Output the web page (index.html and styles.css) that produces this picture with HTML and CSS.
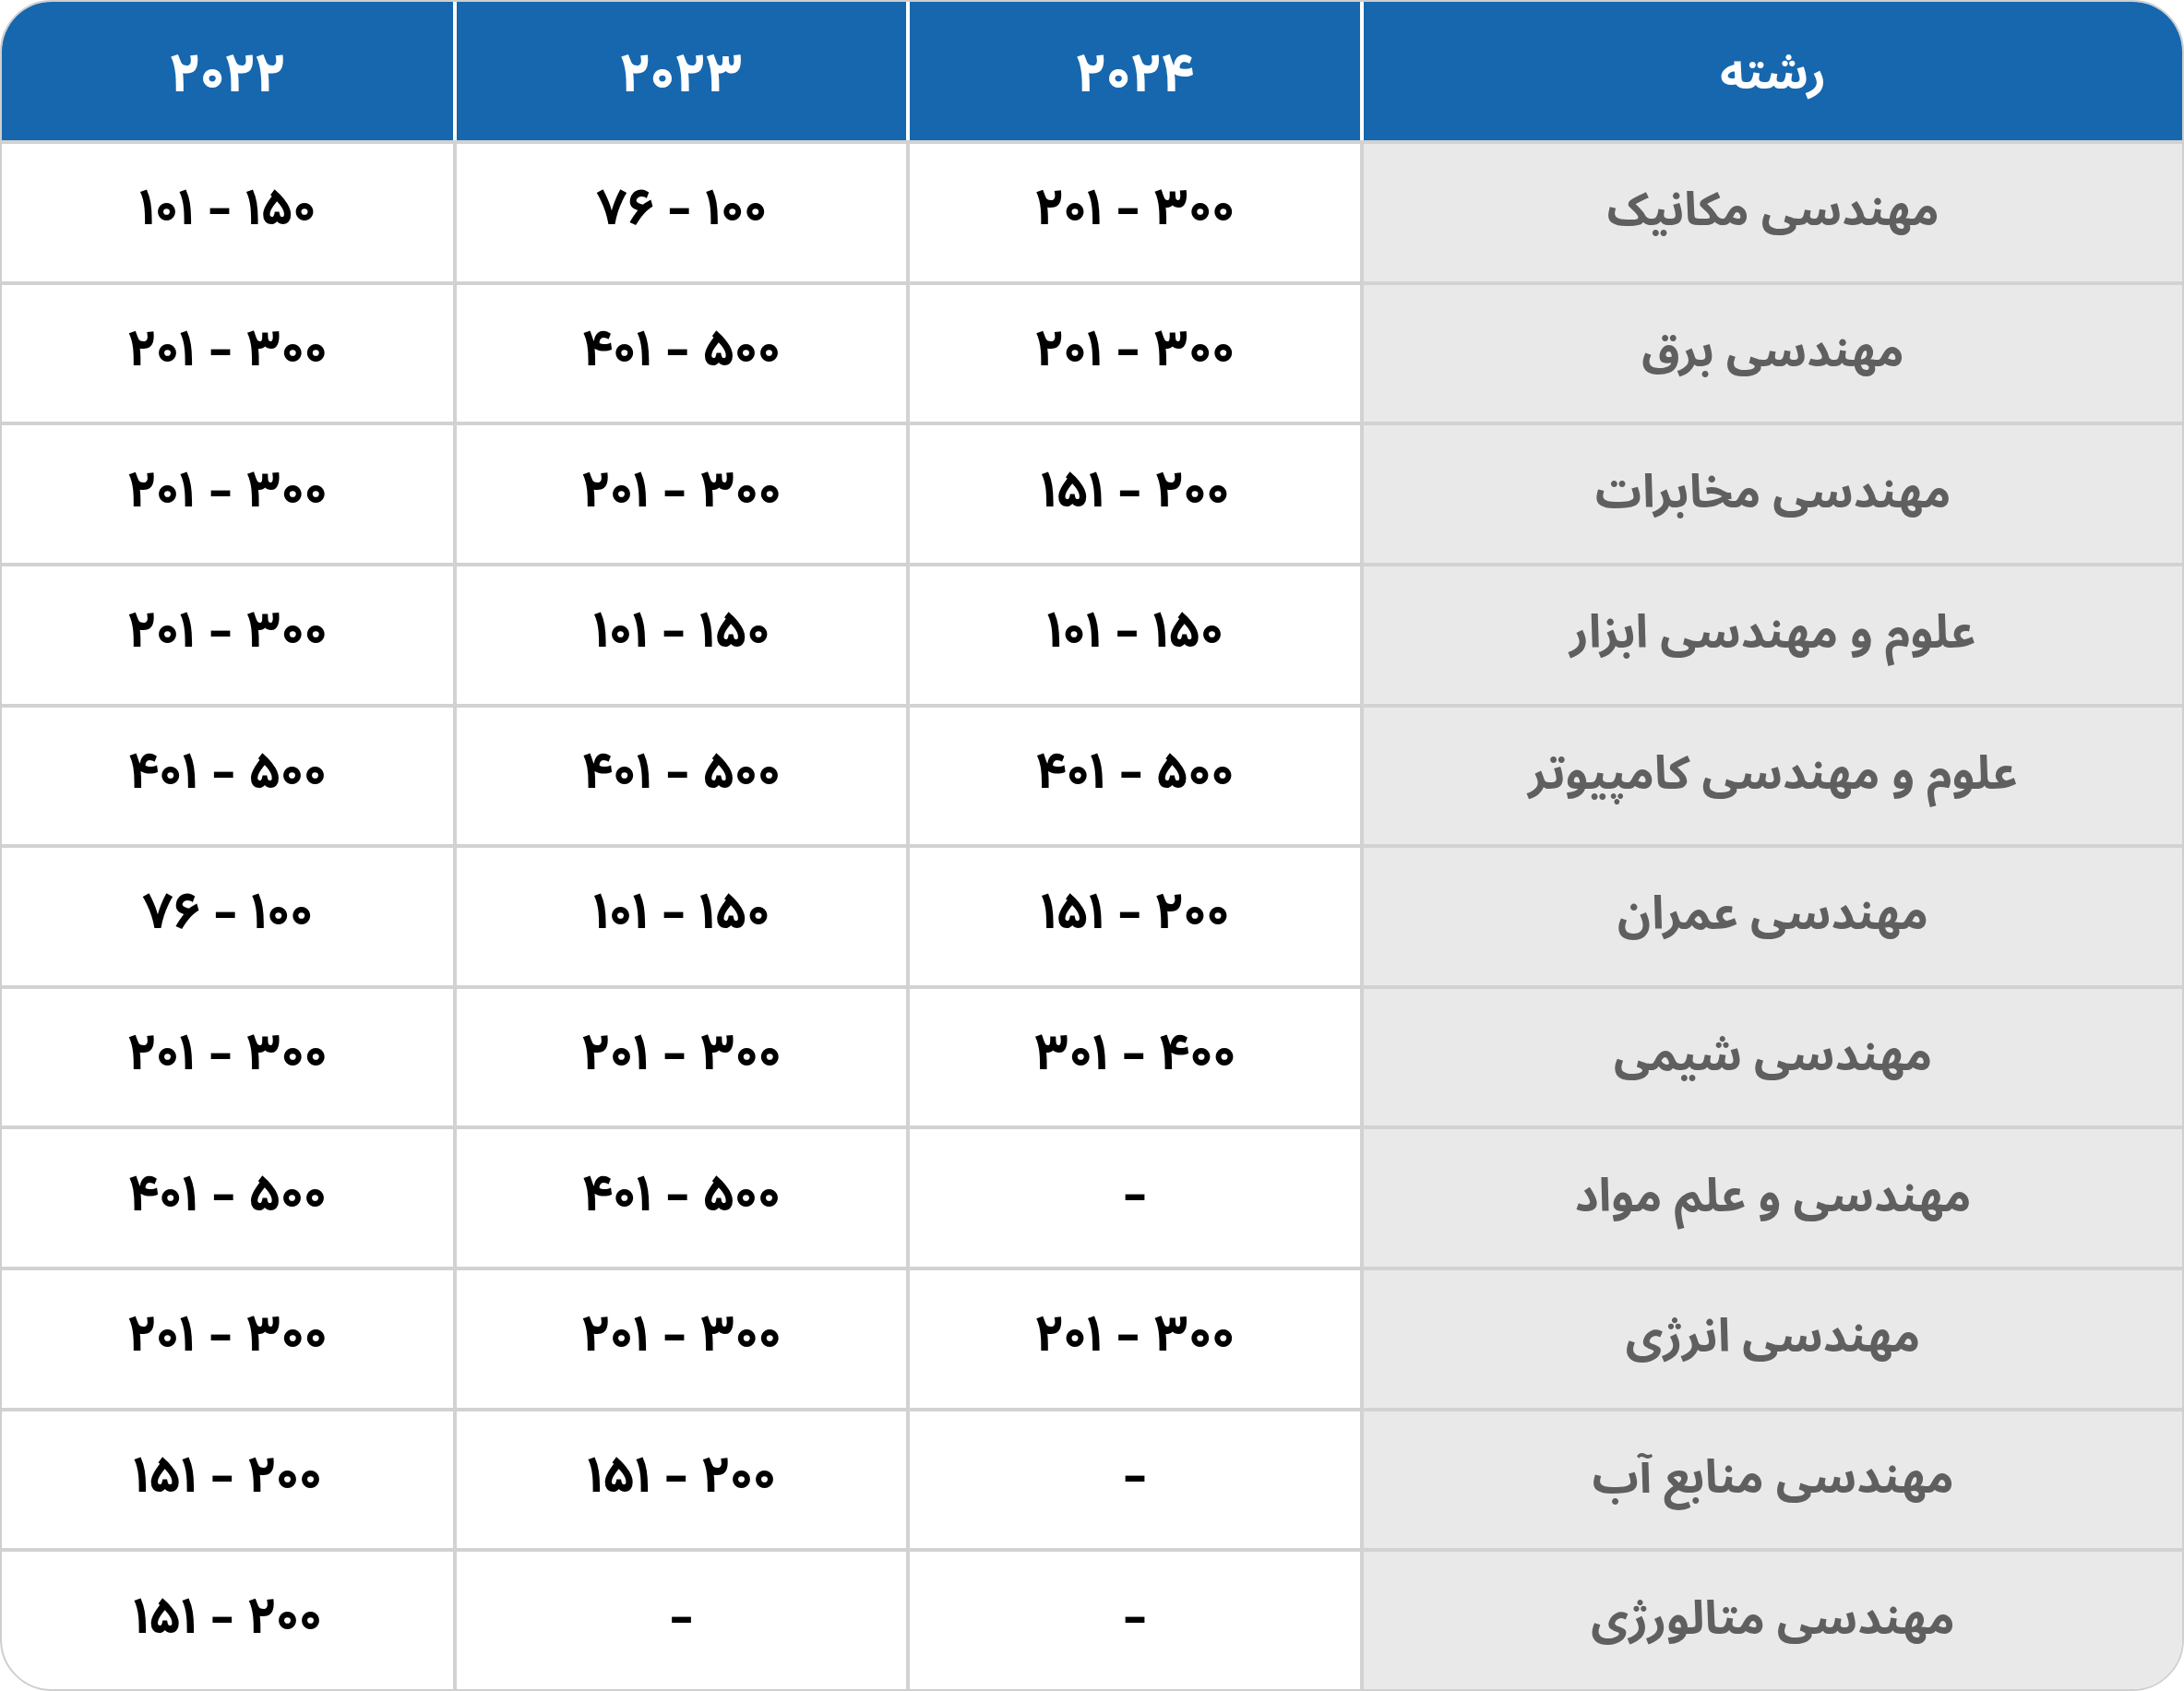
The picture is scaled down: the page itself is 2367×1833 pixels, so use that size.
FILE: index.html
```html
<!DOCTYPE html>
<html lang="fa" dir="rtl">
<head>
<meta charset="utf-8">
<title>رتبه‌بندی رشته‌ها</title>
<link rel="stylesheet" href="styles.css">
</head>
<body>
<div class="table">
  <div class="cell head">رشته</div>
  <div class="cell head num">۲۰۲۴</div>
  <div class="cell head num">۲۰۲۳</div>
  <div class="cell head num last">۲۰۲۲</div>

  <div class="cell field">مهندسی مکانیک</div>
  <div class="cell val">۲۰۱ - ۳۰۰</div>
  <div class="cell val">۷۶ - ۱۰۰</div>
  <div class="cell val last">۱۰۱ - ۱۵۰</div>

  <div class="cell field">مهندسی برق</div>
  <div class="cell val">۲۰۱ - ۳۰۰</div>
  <div class="cell val">۴۰۱ - ۵۰۰</div>
  <div class="cell val last">۲۰۱ - ۳۰۰</div>

  <div class="cell field">مهندسی مخابرات</div>
  <div class="cell val">۱۵۱ - ۲۰۰</div>
  <div class="cell val">۲۰۱ - ۳۰۰</div>
  <div class="cell val last">۲۰۱ - ۳۰۰</div>

  <div class="cell field">علوم و مهندسی ابزار</div>
  <div class="cell val">۱۰۱ - ۱۵۰</div>
  <div class="cell val">۱۰۱ - ۱۵۰</div>
  <div class="cell val last">۲۰۱ - ۳۰۰</div>

  <div class="cell field">علوم و مهندسی کامپیوتر</div>
  <div class="cell val">۴۰۱ - ۵۰۰</div>
  <div class="cell val">۴۰۱ - ۵۰۰</div>
  <div class="cell val last">۴۰۱ - ۵۰۰</div>

  <div class="cell field">مهندسی عمران</div>
  <div class="cell val">۱۵۱ - ۲۰۰</div>
  <div class="cell val">۱۰۱ - ۱۵۰</div>
  <div class="cell val last">۷۶ - ۱۰۰</div>

  <div class="cell field">مهندسی شیمی</div>
  <div class="cell val">۳۰۱ - ۴۰۰</div>
  <div class="cell val">۲۰۱ - ۳۰۰</div>
  <div class="cell val last">۲۰۱ - ۳۰۰</div>

  <div class="cell field">مهندسی و علم مواد</div>
  <div class="cell val">-</div>
  <div class="cell val">۴۰۱ - ۵۰۰</div>
  <div class="cell val last">۴۰۱ - ۵۰۰</div>

  <div class="cell field">مهندسی انرژی</div>
  <div class="cell val">۲۰۱ - ۳۰۰</div>
  <div class="cell val">۲۰۱ - ۳۰۰</div>
  <div class="cell val last">۲۰۱ - ۳۰۰</div>

  <div class="cell field">مهندسی منابع آب</div>
  <div class="cell val">-</div>
  <div class="cell val">۱۵۱ - ۲۰۰</div>
  <div class="cell val last">۱۵۱ - ۲۰۰</div>

  <div class="cell field">مهندسی متالورژی</div>
  <div class="cell val">-</div>
  <div class="cell val">-</div>
  <div class="cell val last">۱۵۱ - ۲۰۰</div>
</div>
</body>
</html>
```
FILE: styles.css
```css
html, body {
  margin: 0;
  padding: 0;
  background: #ffffff;
}

body {
  width: 2367px;
  height: 1833px;
  font-family: "Noto Sans Arabic", "Vazirmatn", "DejaVu Sans", sans-serif;
  font-weight: 700;
}

.table {
  box-sizing: border-box;
  width: 2367px;
  height: 1833px;
  border: 2px solid #cfcfcf;
  border-radius: 56px;
  overflow: hidden;
  display: grid;
  grid-template-columns: 891px 492px 491px 1fr;
  grid-template-rows: 150px repeat(11, 1fr);
  background: #ffffff;
}

.cell {
  box-sizing: border-box;
  display: flex;
  align-items: center;
  justify-content: center;
  border-left: 4px solid #d2d2d2;
  border-top: 4px solid #d2d2d2;
  line-height: 1;
}

.cell.last {
  border-left: none;
}

.head {
  background: #1767ae;
  color: #ffffff;
  border-top: none;
  border-left-color: #ffffff;
  font-size: 50px;
  padding-top: 6px;
}

.head.num {
  direction: ltr;
  font-family: "Vazirmatn", "Noto Sans Arabic", sans-serif;
  font-size: 60px;
  font-weight: 800;
  padding-top: 14px;
}

.field {
  background: #e9e9e9;
  color: #5f5f5f;
  font-size: 50px;
  padding-bottom: 4px;
}

.val {
  direction: ltr;
  color: #000000;
  font-family: "Vazirmatn", "Noto Sans Arabic", sans-serif;
  font-size: 56px;
  font-weight: 800;
}
```
